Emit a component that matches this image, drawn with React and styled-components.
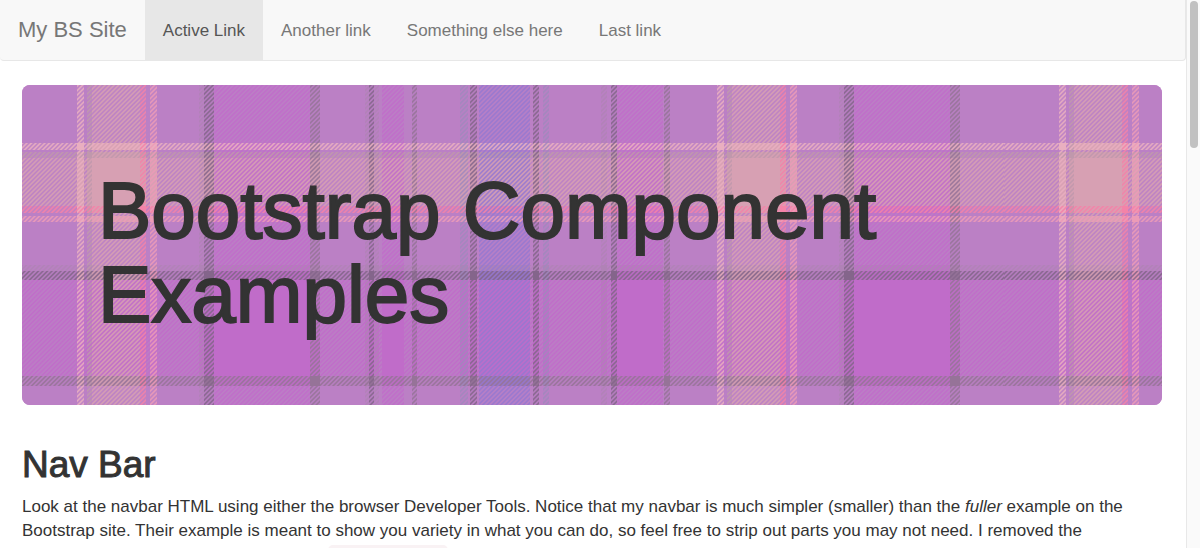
import React from "react";
import styled, { createGlobalStyle } from "styled-components";

const GlobalStyle = createGlobalStyle`
  *, *::before, *::after { box-sizing: border-box; }
  html, body, #root { height: 100%; }
  body {
    margin: 0;
    overflow: hidden;
    background: #fff;
    color: #333;
    font: 17px/24px "Liberation Sans", Helvetica, Arial, sans-serif;
  }
`;

const Viewport = styled.div`
  display: flex;
  height: 100%;
`;

const Page = styled.div`
  flex: 1;
  min-width: 0;
  overflow: hidden;
`;

const ScrollTrack = styled.div`
  flex: none;
  width: 14px;
  padding: 1px 2px 0 3px;
  background: #fafafa;
  border-left: 1px solid #e8e8e8;
`;

const ScrollThumb = styled.div`
  width: 8px;
  height: 147px;
  border-radius: 4px;
  background: #c1c1c1;
`;

const Navbar = styled.nav`
  display: flex;
  height: 61px;
  line-height: 26px;
  background: #f8f8f8;
  border: solid #e7e7e7;
  border-width: 0 1px 1px 0;
  border-radius: 0 0 4px 4px;
`;

const Brand = styled.a`
  padding: 17px 18px;
  font-size: 22px;
  color: #777;
  text-decoration: none;
  white-space: nowrap;
`;

const NavList = styled.ul`
  display: flex;
  margin: 0;
  padding: 0;
  list-style: none;
`;

const NavLink = styled.a`
  display: block;
  padding: 18px 18px 16px;
  color: ${(p) => (p.$active ? "#555" : "#777")};
  background: ${(p) => (p.$active ? "#e7e7e7" : "transparent")};
  text-decoration: none;
  white-space: nowrap;
`;

const Content = styled.main`
  padding: 24px 24px 24px 22px;
`;

const Jumbotron = styled.header`
  position: relative;
  overflow: hidden;
  min-height: 320px;
  padding: 84px 76px 68px;
  border-radius: 8px;
  background: #bd80c5;
`;

const Tartan = styled.svg`
  position: absolute;
  inset: 0;
  width: 100%;
  height: 100%;
`;

const Title = styled.h1`
  position: relative;
  margin: 0;
  font-size: 80px;
  line-height: 84px;
  font-weight: 500;
  -webkit-text-stroke: 2px #333;
`;

const SectionTitle = styled.h2`
  margin: 40px 0 10px;
  font-size: 37px;
  line-height: 40px;
  font-weight: 500;
  -webkit-text-stroke: 1px #333;
`;

const Paragraph = styled.p`
  margin: 0;
`;

const CodeLine = styled.div`
  display: flex;
  padding: 2px 0 0 306px;
`;

const Code = styled.code`
  width: 120px;
  height: 24px;
  border-radius: 5px;
  background: #f9f2f4;
`;

const BASE = "#bb80c5";
const CREAM = "#e9afc0";
const TAUPE = "#c098ac";
const ROSE = "#d7a0b3";
const RED = "#f383a8";
const PINK = "#ec9bb7";
const MAUVE = "#b082b6";
const DARK = "#84658b";
const GRAY = "#967398";
const MAGENTA = "#c06cc9";
const STEEL = "#a087bd";
const BLUE = "#9678d0";

// Threads as [start, width, colour].
const warp = [
  [55, 7, CREAM], [65, 5, TAUPE], [70, 48, ROSE], [118, 6, RED], [128, 7, PINK],
  [177, 5, MAUVE], [182, 10, DARK], [192, 96, MAGENTA], [288, 10, GRAY],
  [343, 4, MAUVE], [347, 5, DARK], [352, 5, MAUVE], [360, 22, MAGENTA],
  [390, 5, GRAY], [438, 8, STEEL], [448, 7, DARK], [457, 51, BLUE],
  [511, 6, DARK], [521, 6, STEEL], [579, 6, MAUVE], [589, 6, DARK],
  [595, 46, MAGENTA], [642, 6, GRAY], [695, 7, CREAM], [705, 5, TAUPE],
  [710, 48, ROSE], [758, 6, RED], [768, 7, PINK], [817, 5, MAUVE],
  [822, 10, DARK], [832, 96, MAGENTA], [928, 10, GRAY],
];

const weft = [
  [58, 7, CREAM], [67, 6, TAUPE], [73, 48, ROSE], [121, 7, RED], [131, 6, PINK],
  [180, 6, MAUVE], [186, 9, DARK], [195, 96, MAGENTA], [291, 10, GRAY],
];

function Plaid() {
  return (
    <Tartan aria-hidden="true">
      <defs>
        <linearGradient
          id="twill"
          gradientUnits="userSpaceOnUse"
          x1="0"
          y1="0"
          x2="2.25"
          y2="2.25"
          spreadMethod="repeat"
        >
          <stop offset="0.1" stopColor="#fff" stopOpacity="0.12" />
          <stop offset="0.4" stopColor="#fff" stopOpacity="0.88" />
          <stop offset="0.6" stopColor="#fff" stopOpacity="0.88" />
          <stop offset="0.9" stopColor="#fff" stopOpacity="0.12" />
        </linearGradient>
        <mask id="over" maskUnits="userSpaceOnUse" x="0" y="0" width="982" height="640">
          <rect width="982" height="640" fill="url(#twill)" />
        </mask>
        <pattern id="sett" width="982" height="640" patternUnits="userSpaceOnUse">
          <rect width="982" height="640" fill={BASE} />
          {weft.map(([y, h, fill]) => (
            <rect key={y} y={y} width="982" height={h} fill={fill} />
          ))}
          <g mask="url(#over)">
            <rect width="982" height="640" fill={BASE} />
            {warp.map(([x, w, fill]) => (
              <rect key={x} x={x} width={w} height="640" fill={fill} />
            ))}
          </g>
        </pattern>
      </defs>
      <rect width="100%" height="100%" fill="url(#sett)" />
    </Tartan>
  );
}

const links = ["Active Link", "Another link", "Something else here", "Last link"];

export default function App() {
  return (
    <Viewport>
      <GlobalStyle />
      <Page>
        <Navbar>
          <Brand href="#">My BS Site</Brand>
          <NavList>
            {links.map((label, i) => (
              <li key={label}>
                <NavLink href="#" $active={i === 0}>{label}</NavLink>
              </li>
            ))}
          </NavList>
        </Navbar>
        <Content>
          <Jumbotron>
            <Plaid />
            <Title>Bootstrap Component Examples</Title>
          </Jumbotron>
          <SectionTitle>Nav Bar</SectionTitle>
          <Paragraph>
            Look at the navbar HTML using either the browser Developer Tools. Notice that my
            navbar is much simpler (smaller) than the <em>fuller</em> example on the Bootstrap
            site. Their example is meant to show you variety in what you can do, so feel free to
            strip out parts you may not need. I removed the
          </Paragraph>
          <CodeLine>
            <Code />
          </CodeLine>
        </Content>
      </Page>
      <ScrollTrack>
        <ScrollThumb />
      </ScrollTrack>
    </Viewport>
  );
}
